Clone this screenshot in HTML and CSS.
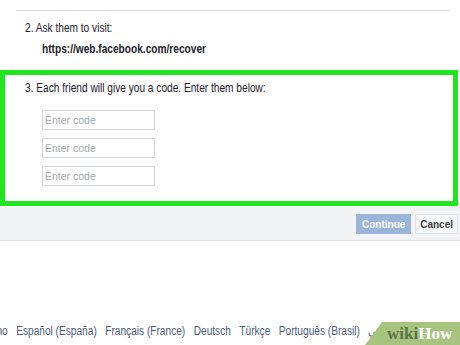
FILE: index.html
```html
<!DOCTYPE html>
<html lang="en">
<head>
  <meta charset="UTF-8" />
  <title>Recover account</title>
  <link rel="stylesheet" href="styles.css">
</head>
<body>
  <div class="dialog">
    <div class="rule"></div>
    <p class="step">2. Ask them to visit:</p>
    <p class="url">https://web.facebook.com/recover</p>
    <div class="highlight">
      <p class="step">3. Each friend will give you a code. Enter them below:</p>
      <div class="codes">
        <input class="code" type="text" placeholder="Enter code">
        <input class="code" type="text" placeholder="Enter code">
        <input class="code" type="text" placeholder="Enter code">
      </div>
    </div>
    <div class="actions">
      <button class="btn btn-primary">Continue</button>
      <button class="btn">Cancel</button>
    </div>
  </div>
  <div class="langs">
    <a href="#">Italiano</a>
    <a href="#">Español (España)</a>
    <a href="#">Français (France)</a>
    <a href="#">Deutsch</a>
    <a href="#">Türkçe</a>
    <a href="#">Português (Brasil)</a>
    <a href="#">عربي</a>
  </div>
  <div class="badge">
    <svg width="95" height="23" viewBox="0 0 95 23">
      <polygon points="17,0 95,0 95,23 0,23" fill="#a6c480" />
    </svg>
    <span class="badge-text"><span class="wiki">wiki</span>How</span>
  </div>
</body>
</html>
```

FILE: styles.css
```css
body {
  margin: 0;
  background: #fff;
  font-family: 'Liberation Sans', Arial, sans-serif;
  color: #1d2129;
  width: 460px;
  height: 345px;
  overflow: hidden;
  position: relative;
}
p {
  margin: 0;
}
/* the shot is squeezed sideways, so the text is too */
.step, .url, .langs {
  transform: scaleX(0.845);
  transform-origin: left center;
  white-space: nowrap;
}
.dialog {
  padding-top: 10px;
}
.rule {
  margin: 0 10px 0 16px;
  border-top: 1px solid #dadde1;
}
.step {
  font-size: 12px;
  margin: 10px 0 0 25px;
  line-height: 15px;
}
.url {
  font-size: 12px;
  font-weight: 700;
  margin: 6px 0 0 42px;
  line-height: 15px;
}
.highlight {
  margin: 13px 2px 0 0;
  border: 5px solid #1fe61f;
  height: 126px;
  background: #fff;
}
.highlight .step {
  margin: 6px 0 0 20px;
}
.codes {
  display: flex;
  flex-direction: column;
  gap: 8px;
  padding: 14px 0 0 37px;
}
.code {
  box-sizing: border-box;
  width: 113px;
  height: 20px;
  margin: 0;
  border: 1px solid #d3d6db;
  padding: 0 2px;
  font-family: 'Liberation Sans', Arial, sans-serif;
  font-size: 10.5px;
  color: #1d2129;
}
.code::placeholder {
  color: #a8aab0;
}
.actions {
  display: flex;
  justify-content: flex-end;
  gap: 4px;
  height: 35px;
  padding: 8px 2px 0 0;
  box-sizing: border-box;
  background: #f2f3f5;
  border-bottom: 1px solid #dfe1e5;
}
.btn {
  box-sizing: border-box;
  height: 20px;
  padding: 0 4px;
  border: 1px solid #dfe0e3;
  background: #f6f7f9;
  font-family: 'Liberation Sans', Arial, sans-serif;
  font-size: 10px;
  font-weight: 700;
  color: #3b3e44;
}
.btn-primary {
  background: #9cb4d8;
  border-color: #9cb4d8;
  color: #fff;
  width: 55px;
}
.langs {
  position: absolute;
  left: -25px;
  top: 324px;
  display: flex;
  gap: 10px;
  font-size: 12px;
}
.langs a {
  color: #4b5a7d;
  text-decoration: none;
}
.badge {
  position: absolute;
  right: 0;
  bottom: 0;
  width: 95px;
  height: 23px;
}
.badge svg {
  display: block;
}
.badge-text {
  position: absolute;
  left: 22px;
  top: 2px;
  font-family: 'Liberation Serif', 'Times New Roman', serif;
  font-weight: 700;
  font-size: 17px;
  line-height: 19px;
  color: #fff;
}
.wiki {
  color: #5d7247;
}
```
